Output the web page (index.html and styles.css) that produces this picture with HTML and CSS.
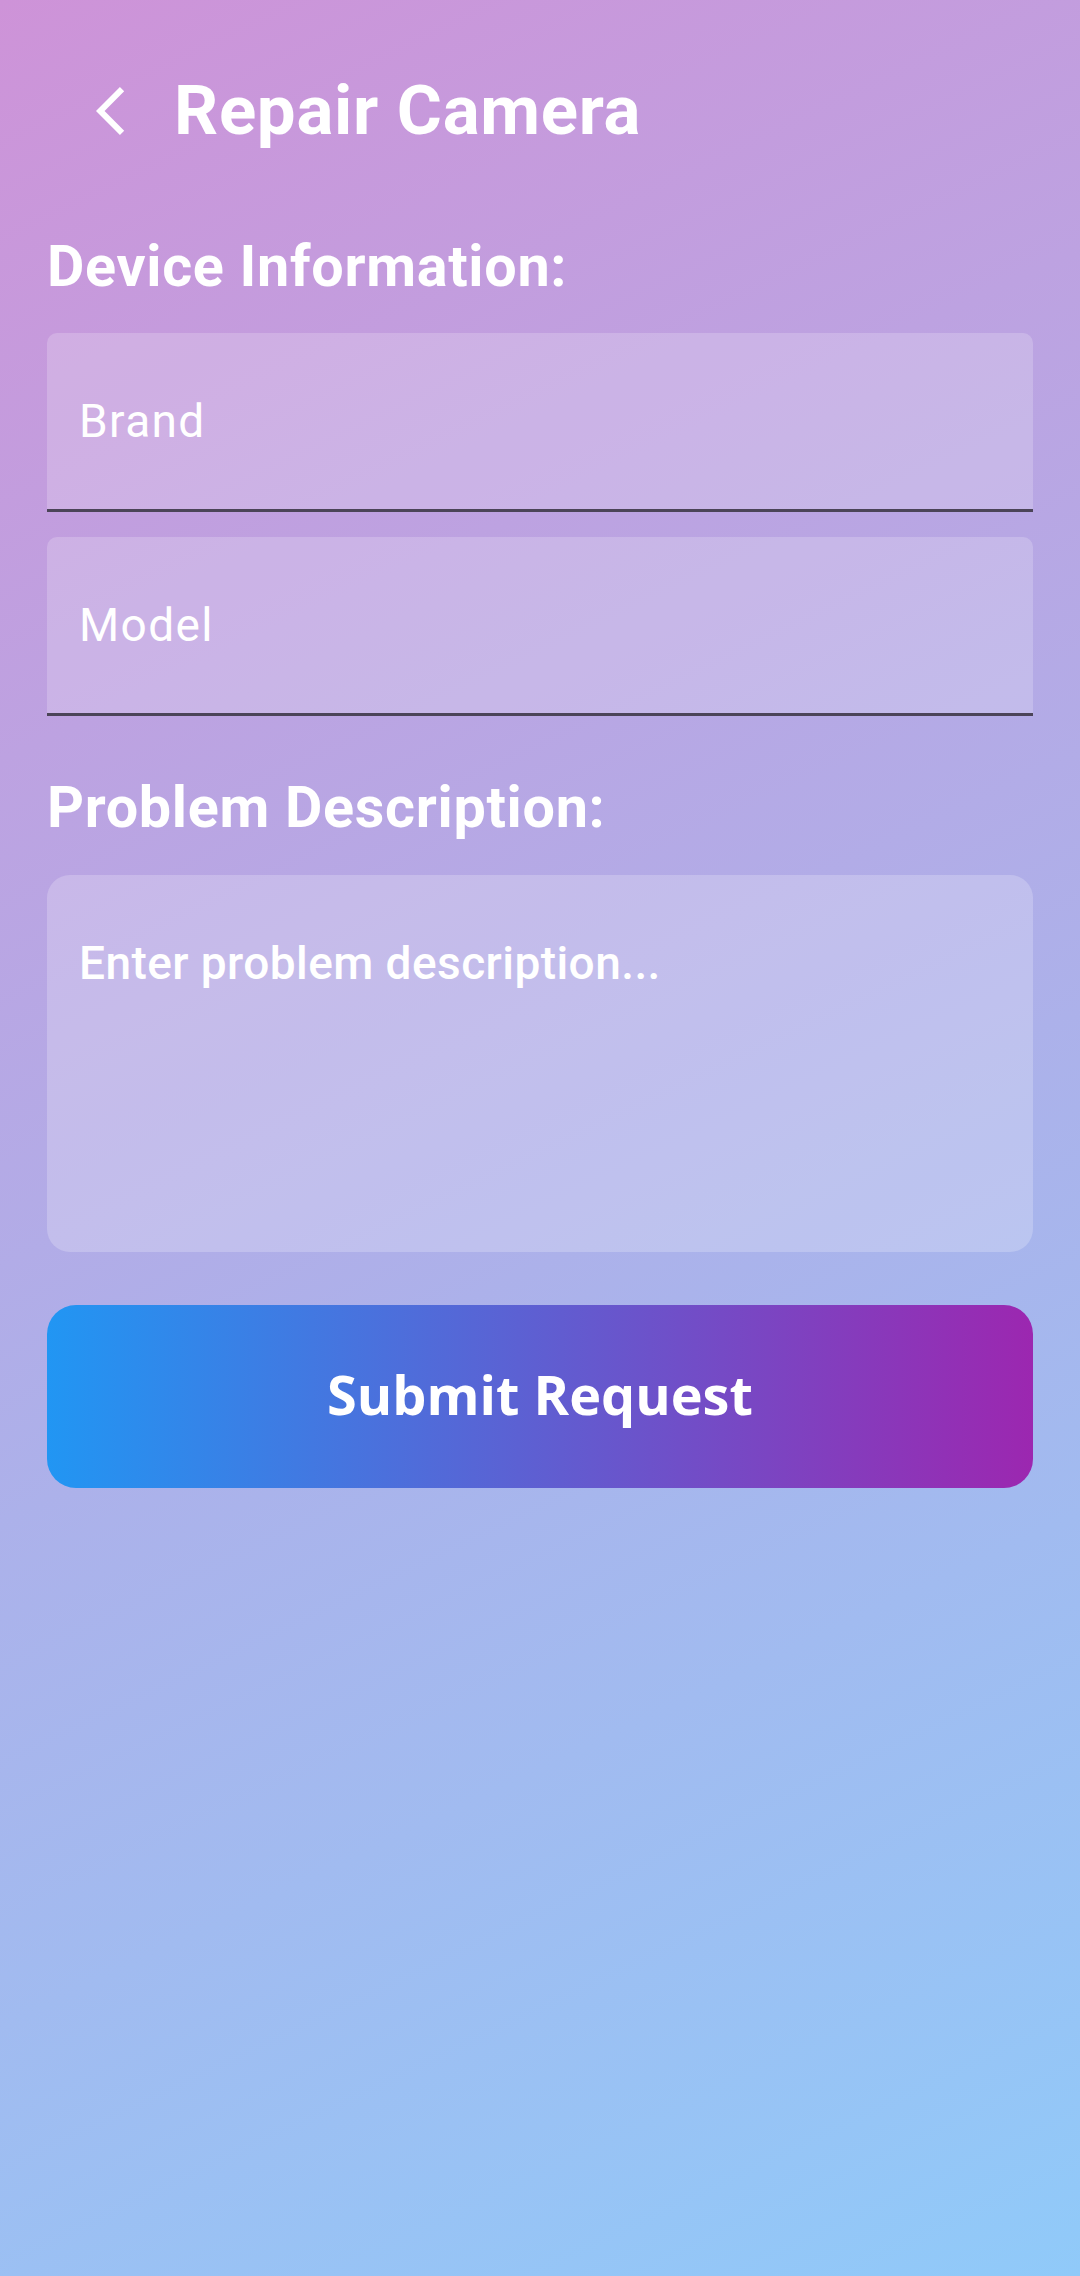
FILE: index.html
```html
<!DOCTYPE html>
<html lang="en">
<head>
<meta charset="utf-8">
<title>Repair Camera</title>
<link rel="stylesheet" href="styles.css">
</head>
<body>
<div class="screen">
  <header class="topbar">
    <button class="back" aria-label="Back">
      <svg class="back-icon" viewBox="0 0 12 24" width="29" height="58" aria-hidden="true">
        <path d="M11.67 3.87L9.9 2.1 0 12l9.9 9.9 1.77-1.77L3.54 12z" fill="#ffffff"/>
      </svg>
    </button>
    <h1 class="title">Repair Camera</h1>
  </header>
  <main class="form">
    <h2 class="section-label">Device Information:</h2>
    <div class="field"><span class="placeholder">Brand</span></div>
    <div class="field"><span class="placeholder">Model</span></div>
    <h2 class="section-label section-label--problem">Problem Description:</h2>
    <div class="textarea"><span class="placeholder placeholder--medium">Enter problem description...</span></div>
    <button class="submit">Submit Request</button>
  </main>
</div>
</body>
</html>
```

FILE: styles.css
```css
html, body {
  margin: 0;
  padding: 0;
}

body {
  width: 1080px;
  min-height: 2276px;
  font-family: Roboto, "Noto Sans", sans-serif;
  color: #ffffff;
}

.screen {
  min-height: 2276px;
  background: linear-gradient(154.6deg, #CE93D8 0%, #90CAF9 100%);
}

.topbar {
  display: flex;
  align-items: center;
  padding: 70px 0 0 96px;
}

.back {
  display: flex;
  align-items: center;
  padding: 0;
  margin: 0;
  border: none;
  background: none;
}

.back-icon {
  display: block;
}

.title {
  margin: 0 0 0 49px;
  font-size: 69px;
  line-height: 81px;
  font-weight: 700;
  letter-spacing: 0.7px;
}

.form {
  display: flex;
  flex-direction: column;
  padding: 0 47px;
}

.section-label {
  margin: 82px 0 33px;
  font-size: 57.5px;
  line-height: 67px;
  font-weight: 700;
  letter-spacing: 0.7px;
}

.section-label--problem {
  margin: 58px 0 34px;
}

.field {
  box-sizing: border-box;
  height: 179px;
  display: flex;
  align-items: center;
  padding-left: 32px;
  background: rgba(255, 255, 255, 0.2);
  border-bottom: 3px solid #4B4458;
  border-radius: 10px 10px 0 0;
}

.field + .field {
  margin-top: 25px;
}

.placeholder {
  font-size: 46px;
  line-height: 54px;
  font-weight: 400;
  letter-spacing: 1.4px;
}

.placeholder--medium {
  font-weight: 500;
  letter-spacing: 0.43px;
}

.textarea {
  box-sizing: border-box;
  height: 377px;
  padding: 61px 32px 0;
  background: rgba(255, 255, 255, 0.22);
  border-radius: 23px;
}

.submit {
  margin-top: 53px;
  height: 183px;
  border: none;
  border-radius: 29px;
  background: linear-gradient(90deg, #2196F3 0%, #9C27B0 100%);
  color: #ffffff;
  font-family: "Open Sans", "Noto Sans", sans-serif;
  font-size: 54px;
  font-weight: 700;
  padding: 0 0 6px;
}
```
